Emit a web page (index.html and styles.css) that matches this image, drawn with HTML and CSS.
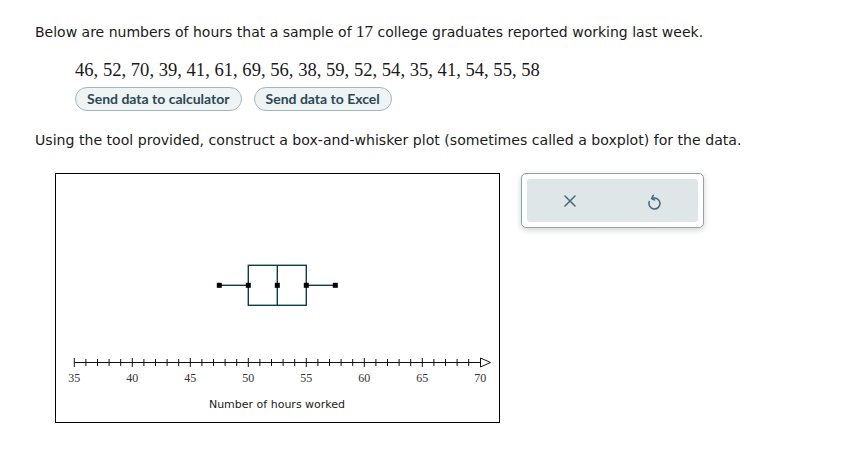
FILE: index.html
```html
<!DOCTYPE html>
<html>
<head>
<meta charset="utf-8">
<link rel="stylesheet" href="styles.css">
</head>
<body>
<div class="page">
  <p class="intro">Below are numbers of hours that a sample of <span class="num">17</span> college graduates reported working last week.</p>
  <div class="data">46, 52, 70, 39, 41, 61, 69, 56, 38, 59, 52, 54, 35, 41, 54, 55, 58</div>
  <div class="buttons">
    <button class="pill">Send data to calculator</button>
    <button class="pill">Send data to Excel</button>
  </div>
  <p class="intro task">Using the tool provided, construct a box-and-whisker plot (sometimes called a boxplot) for the data.</p>
  <div class="plot-row">
    <div class="plot">
      <svg width="445" height="250" viewBox="0 0 445 250">
        <g class="box">
          <line x1="164.3" y1="112.3" x2="193.3" y2="112.3"/>
          <line x1="251.3" y1="112.3" x2="280.3" y2="112.3"/>
          <rect x="193.3" y="92.3" width="58" height="40"/>
          <line x1="222.3" y1="92.3" x2="222.3" y2="132.3"/>
        </g>
        <g class="marks">
          <rect x="161.8" y="109.8" width="5" height="5"/>
          <rect x="190.8" y="109.8" width="5" height="5"/>
          <rect x="219.8" y="109.8" width="5" height="5"/>
          <rect x="248.8" y="109.8" width="5" height="5"/>
          <rect x="277.8" y="109.8" width="5" height="5"/>
        </g>
        <g class="axis" id="axis">
          <line x1="19.3" y1="189.5" x2="426" y2="189.5"/>
        </g>
        <polygon class="arrow" points="425.5,185 435.5,189.5 425.5,194"/>
        <g class="ticklabels" id="labels"></g>
        <text class="axis-title" x="222" y="235" text-anchor="middle">Number of hours worked</text>
      </svg>
    </div>
    <div class="tools">
      <div class="tools-inner">
        <button class="tool" aria-label="clear">
          <svg width="12" height="12" viewBox="0 0 12 12"><path d="M1 1 L11 11 M11 1 L1 11"/></svg>
        </button>
        <button class="tool" aria-label="reset">
          <svg width="14" height="18" viewBox="0 0 14 18"><path d="M1.3 9.6 A5.5 5.5 0 1 0 4.6 6.3"/><path d="M5.3 3.4 L3.6 6.6 L6.6 8"/></svg>
        </button>
      </div>
    </div>
  </div>
</div>
<script src="app.js"></script>
</body>
</html>
```

FILE: app.js
```js
(function () {
  var ns = 'http://www.w3.org/2000/svg';
  var axis = document.getElementById('axis');
  var labels = document.getElementById('labels');
  for (var v = 35; v <= 69; v++) {
    var x = 19.3 + (v - 35) * 11.6;
    var major = v % 5 === 0;
    var l = document.createElementNS(ns, 'line');
    l.setAttribute('x1', x); l.setAttribute('x2', x);
    l.setAttribute('y1', major ? 185 : 186);
    l.setAttribute('y2', major ? 194 : 193);
    axis.appendChild(l);
  }
  for (var w = 35; w <= 70; w += 5) {
    var t = document.createElementNS(ns, 'text');
    t.setAttribute('x', 19.3 + (w - 35) * 11.6);
    t.setAttribute('y', 209);
    t.setAttribute('text-anchor', 'middle');
    t.textContent = w;
    labels.appendChild(t);
  }
})();
```

FILE: styles.css
```css
html, body {
  margin: 0;
  padding: 0;
  background: #fff;
}
.page {
  padding: 20px 0 0 35px;
  color: #1a1a1a;
}
.intro {
  margin: 0;
  font-family: "DejaVu Sans", Verdana, sans-serif;
  font-size: 14px;
  line-height: 24px;
  white-space: nowrap;
}
.num {
  font-family: "Liberation Serif", "Times New Roman", serif;
  font-size: 17px;
}
.data {
  margin: 15px 0 0 40px;
  font-family: "Liberation Serif", "Times New Roman", serif;
  font-size: 18.6px;
  line-height: 22px;
}
.buttons {
  margin: 6px 0 0 40px;
  display: flex;
  gap: 12px;
}
.pill {
  height: 24px;
  padding: 0 11px;
  border: 1px solid #a3b6bc;
  border-radius: 12px;
  background: #eef3f4;
  color: #2b4856;
  font-family: Lato, "Open Sans", sans-serif;
  font-weight: 700;
  font-size: 14px;
  line-height: 22px;
}
.task {
  margin-top: 17px;
  font-size: 14.1px;
}
.plot-row {
  margin: 21px 0 0 20px;
  display: flex;
  align-items: flex-start;
  gap: 21px;
}
.plot {
  width: 445px;
  height: 250px;
  box-sizing: border-box;
  border: 1px solid #000;
  overflow: hidden;
}
.plot svg {
  display: block;
  margin: -1px;
}
.box line, .box rect {
  stroke: #0c3c4a;
  stroke-width: 1.4;
  fill: none;
}
.marks rect {
  fill: #000;
}
.axis line {
  stroke: #111;
  stroke-width: 1;
}
.arrow {
  fill: #fff;
  stroke: #111;
  stroke-width: 1;
}
.ticklabels text {
  font-family: "Liberation Serif", "Times New Roman", serif;
  font-size: 12px;
  fill: #333;
}
.axis-title {
  font-family: "DejaVu Sans", Verdana, sans-serif;
  font-size: 11px;
  fill: #1a1a1a;
}
.tools {
  width: 183px;
  height: 55px;
  box-sizing: border-box;
  border: 1px solid #8ea3aa;
  border-radius: 5px;
  background: #fff;
  padding: 5px;
  box-shadow: 0 2px 6px rgba(0, 0, 0, 0.18);
}
.tools-inner {
  height: 100%;
  display: flex;
  background: #dfe6e8;
  border-radius: 3px;
}
.tool {
  flex: 1;
  border: 0;
  background: transparent;
  display: flex;
  align-items: center;
  justify-content: center;
  padding: 0;
}
.tool svg path {
  fill: none;
  stroke: #406b79;
  stroke-width: 1.5;
  stroke-linecap: round;
  stroke-linejoin: round;
}
```
